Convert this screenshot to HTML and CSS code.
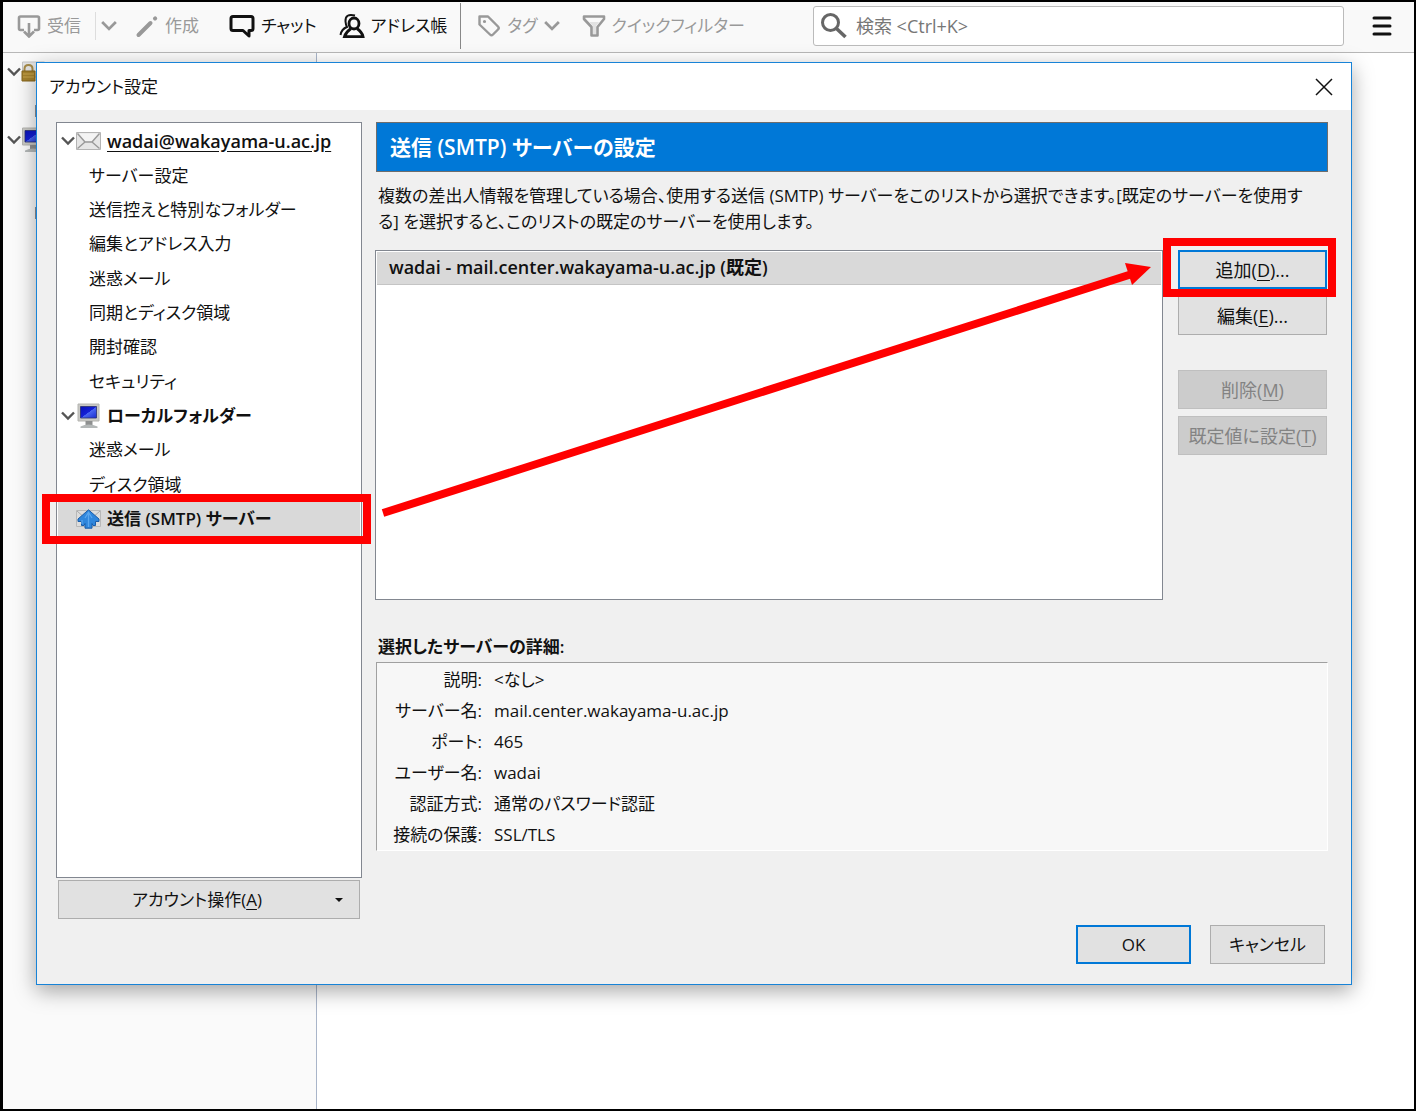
FILE: index.html
```html
<!DOCTYPE html>
<html lang="ja">
<head>
    <meta charset="UTF-8">
    <meta name="viewport" content="width=device-width, initial-scale=1.0">
    <title>アカウント設定</title>
    <link rel="stylesheet" href="styles.css">
</head>
<body>
    <svg class="defs" aria-hidden="true">
        <defs>
            <symbol id="chevron" viewBox="0 0 14 10"><path d="M1 1.5 7 7.5 13 1.5" fill="none" stroke="currentColor" stroke-width="2.4"/></symbol>
            <linearGradient id="screen" x1="0" y1="0" x2="1" y2="1">
                <stop offset="0" stop-color="#0a12b4"/>
                <stop offset="0.5" stop-color="#1420d8"/>
                <stop offset="0.52" stop-color="#4a66f0"/>
                <stop offset="1" stop-color="#1a2cd0"/>
            </linearGradient>
            <symbol id="monitor" viewBox="0 0 24 26">
                <path d="M1.5 1h21v17h-21z" fill="#c9c9c5" stroke="#b4b4b0"/>
                <path d="M4 3.5h16v11.5H4z" fill="url(#screen)" stroke="#2a2f70" stroke-width=".8"/>
                <path d="M9 18h7v4H9z" fill="#8e9090"/>
                <path d="M4 23.5q8-4 17 0V25H4z" fill="#b4b8b8"/>
            </symbol>
            <symbol id="mail" viewBox="0 0 25 18">
                <path d="M.5.5h24v17H.5z" fill="#e6e6e6" stroke="#b4b4b4"/>
                <path d="M2.5 1.5h20L16 9H9z" fill="#f4f4f4"/>
                <path d="M1.5 1.5 9 10h7l7.5-8.5M1.5 16.5 9 10M23.5 16.5 16 10" fill="none" stroke="#999" stroke-width="1.4"/>
            </symbol>
        </defs>
    </svg>

    <div class="app">
        <header class="toolbar">
            <button class="tool get" type="button" disabled>
                <svg width="24" height="24" viewBox="0 0 24 24" fill="none" stroke="currentColor" stroke-width="2.6">
                    <path d="M7 16H3.500Q2 16 2 14.500V4Q2 2.500 3.500 2.500h17Q22 2.500 22 4v10.500q0 1.500-1.500 1.500H17"/>
                    <path d="M12 9v13M7 17.500l5 5 5-5"/>
                </svg>
                受信
            </button>
            <button class="tool drop" type="button" disabled aria-label="受信メニュー"><svg width="16" height="12"><use href="#chevron"/></svg></button>
            <button class="tool write" type="button" disabled>
                <svg width="24" height="24" viewBox="0 0 24 24" stroke="currentColor" stroke-width="4" stroke-linecap="round">
                    <path d="M3.500 21 15.500 9"/><path d="M20 4.500l.2-.2"/>
                </svg>
                作成
            </button>
            <button class="tool chat" type="button">
                <svg width="26" height="24" viewBox="0 0 26 24" fill="none" stroke="currentColor" stroke-width="3" stroke-linejoin="round">
                    <path d="M4 2.500h18q2 0 2 2v10q0 2-2 2h-2V22L14 16.500H4q-2 0-2-2v-10q0-2 2-2z"/>
                </svg>
                チャット
            </button>
            <button class="tool book" type="button">
                <svg width="26" height="26" viewBox="0 0 26 26" fill="none" stroke="currentColor" stroke-width="2.8">
                    <ellipse cx="15" cy="10.500" rx="5" ry="5.500"/>
                    <path d="M12 15.500Q7 19 5.500 23.600h18.500Q23 19 18 15.500"/>
                    <path d="M16 2.500Q6 0 6.500 8.500q.3 3.500 1.500 5.500Q2.500 16 1.500 22" stroke-width="2"/>
                </svg>
                アドレス帳
            </button>
            <span class="divider"></span>
            <button class="tool tag" type="button" disabled>
                <svg width="24" height="24" viewBox="0 0 24 24" fill="none" stroke="currentColor" stroke-width="2.4" stroke-linejoin="round">
                    <path d="M2.500 2.500h8.500L21 12.500q1.500 1.500 0 3L16 20.500q-1.500 1.500-3 0L2.500 10.500z"/>
                    <circle cx="7.500" cy="7.500" r=".8" stroke-width="1.600"/>
                </svg>
                タグ
                <svg width="16" height="12"><use href="#chevron"/></svg>
            </button>
            <button class="tool filter" type="button" disabled>
                <svg width="24" height="24" viewBox="0 0 24 24" fill="none" stroke="currentColor" stroke-width="2.6" stroke-linejoin="round">
                    <path d="M2 2.500h20v2.500L15.500 13v8.500h-6V13L2 5z"/>
                    <path d="M7 8h10l-3 4v8h-3v-8z" fill="#e2e2e2" stroke="none"/>
                </svg>
                クイックフィルター
            </button>
            <label class="search">
                <svg width="28" height="28" viewBox="0 0 28 28" fill="none" stroke="#666" stroke-width="3">
                    <circle cx="10.500" cy="10.500" r="8"/><path d="M16.500 16.500 25.500 25" stroke-width="3.600"/>
                </svg>
                <input type="search" placeholder="検索 &lt;Ctrl+K&gt;" aria-label="検索">
            </label>
            <button class="tool menu" type="button" aria-label="メニュー">
                <svg width="20" height="22" viewBox="0 0 20 22" stroke="currentColor" stroke-width="3" stroke-linecap="round"><path d="M2 3h16M2 11h16M2 19h16"/></svg>
            </button>
        </header>

        <div class="workspace">
            <aside class="folders">
                <div class="folder">
                    <svg class="chev" width="14" height="10"><use href="#chevron"/></svg>
                    <svg width="24" height="24" viewBox="0 0 24 24">
                        <path d="M1.500 2h22v15h-22z" fill="#e4e4e4" stroke="#c4c4c4"/>
                        <path d="M3.500 12V9q0-4 4-4t4 4v3" fill="none" stroke="#a58a48" stroke-width="2"/>
                        <path d="M1 11h13v10H1z" fill="#a5822d" stroke="#84651c"/>
                        <path d="M2 14h11M2 17h11" stroke="#c9a54e"/>
                    </svg>
                </div>
                <div class="folder child"><svg width="20" height="14"><path d="M0 1h20v12H0z" fill="#8b8f96"/></svg></div>
                <div class="folder">
                    <svg class="chev" width="14" height="10"><use href="#chevron"/></svg>
                    <svg width="24" height="26"><use href="#monitor"/></svg>
                </div>
                <div class="folder"></div>
                <div class="folder child"><svg width="20" height="14"><path d="M0 1h20v12H0z" fill="#8b8f96"/></svg></div>
            </aside>
            <main class="messages"></main>
        </div>

        <section class="dialog" role="dialog" aria-labelledby="dialogTitle">
            <div class="titlebar">
                <h1 id="dialogTitle">アカウント設定</h1>
                <button class="close" type="button" aria-label="閉じる">
                    <svg width="18" height="18" viewBox="0 0 18 18" stroke="#111" stroke-width="1.5"><path d="M1 1l16 16M17 1 1 17"/></svg>
                </button>
            </div>

            <div class="content">
                <nav class="accounts">
                    <ul class="tree">
                        <li class="account"><svg class="chev" width="14" height="10"><use href="#chevron"/></svg><svg width="25" height="18"><use href="#mail"/></svg><a class="address" href="#">wadai@wakayama-u.ac.jp</a></li>
                        <li><a href="#">サーバー設定</a></li>
                        <li><a href="#">送信控えと特別なフォルダー</a></li>
                        <li><a href="#">編集とアドレス入力</a></li>
                        <li><a href="#">迷惑メール</a></li>
                        <li><a href="#">同期とディスク領域</a></li>
                        <li><a href="#">開封確認</a></li>
                        <li><a href="#">セキュリティ</a></li>
                        <li class="account"><svg class="chev" width="14" height="10"><use href="#chevron"/></svg><svg width="25" height="26"><use href="#monitor"/></svg><a href="#">ローカルフォルダー</a></li>
                        <li><a href="#">迷惑メール</a></li>
                        <li><a href="#">ディスク領域</a></li>
                        <li class="account selected">
                            <span class="chev"></span>
                            <svg width="25" height="20" viewBox="0 0 25 20">
                                <path d="M.5 1.500h24v16H.5z" fill="#dcdcdc" stroke="#b8b8b8"/>
                                <path d="M1 2l8 7M24 2l-8 7" stroke="#aaa"/>
                                <path d="M12.500.8 23 10v2.500h-3.500v4H17l-1-2v4.700H9V14.500l-1 2H5.500v-4H2V10z" fill="#2f86dc" stroke="#1b5ca8"/>
                                <path d="M12.500 3v15M9 9l3.500-5.500L16 9M6 11v4" fill="none" stroke="#5aa6ee" stroke-width="1.3"/>
                            </svg>
                            <a href="#">送信 (SMTP) サーバー</a>
                        </li>
                    </ul>
                    <button class="btn actions" type="button"><span>アカウント操作(<u>A</u>)</span><i class="caret"></i></button>
                </nav>

                <div class="panel">
                    <h2 class="banner">送信 (SMTP) サーバーの設定</h2>
                    <p class="description">複数の差出人情報を管理している場合、使用する送信 (SMTP) サーバーをこのリストから選択できます。[既定のサーバーを使用する] を選択すると、このリストの既定のサーバーを使用します。</p>

                    <div class="servers">
                        <ul class="server-list" role="listbox" aria-label="送信サーバー">
                            <li role="option" aria-selected="true">wadai - mail.center.wakayama-u.ac.jp (既定)</li>
                        </ul>
                        <div class="server-buttons">
                            <button class="btn primary add" type="button">追加(<u>D</u>)...</button>
                            <button class="btn edit" type="button">編集(<u>E</u>)...</button>
                            <button class="btn" type="button" disabled>削除(<u>M</u>)</button>
                            <button class="btn" type="button" disabled>既定値に設定(<u>T</u>)</button>
                        </div>
                    </div>

                    <h3 class="details-title">選択したサーバーの詳細:</h3>
                    <dl class="details">
                        <dt>説明:</dt><dd>&lt;なし&gt;</dd>
                        <dt>サーバー名:</dt><dd>mail.center.wakayama-u.ac.jp</dd>
                        <dt>ポート:</dt><dd>465</dd>
                        <dt>ユーザー名:</dt><dd>wadai</dd>
                        <dt>認証方式:</dt><dd>通常のパスワード認証</dd>
                        <dt>接続の保護:</dt><dd>SSL/TLS</dd>
                    </dl>
                </div>
            </div>

            <div class="dialog-buttons">
                <button class="btn primary" type="button">OK</button>
                <button class="btn" type="button">キャンセル</button>
            </div>

            <svg class="arrow" width="774" height="260" viewBox="0 0 774 260" aria-hidden="true">
                <path d="M3 254 752 15" stroke="#f00" stroke-width="8"/>
                <path d="M745 4 771 8 752 26z" fill="#f00"/>
            </svg>
        </section>
    </div>
</body>
</html>
```
FILE: styles.css
```css
* {
    box-sizing: border-box;
}
body {
    margin: 0;
    font-family: "Open Sans", "Noto Sans CJK JP", sans-serif;
    font-size: 17px;
    line-height: 26px;
    color: #111;
    font-feature-settings: "palt";
}
h1, h2, h3, p, ul, dl, dd {
    margin: 0;
    padding: 0;
}
ul {
    list-style: none;
}
button, input {
    font: inherit;
    color: inherit;
    font-feature-settings: inherit;
}
svg {
    flex: none;
}
.defs {
    position: absolute;
    width: 0;
    height: 0;
}
.app {
    position: relative;
    display: flex;
    flex-direction: column;
    min-height: 100vh;
    border: 2px solid #000;
    border-left-width: 3px;
    background: #fff;
}

/* toolbar */
.toolbar {
    display: flex;
    align-items: center;
    height: 51px;
    padding: 0 22px 3px 14px;
    background: #f9f9f9;
    border-bottom: 1px solid #b8b8b8;
}
.tool {
    display: flex;
    align-items: center;
    gap: 6px;
    padding: 0;
    border: 0;
    background: none;
    white-space: nowrap;
}
.tool:disabled {
    color: #999;
}
.drop {
    height: 28px;
    margin-left: 14px;
    padding-left: 5px;
    border-left: 1px solid #ddd;
}
.write {
    margin-left: 18px;
}
.chat {
    margin-left: 30px;
}
.book {
    margin-left: 22px;
}
.divider {
    align-self: stretch;
    width: 1px;
    margin: 1px 16px 0 13px;
    background: #888;
}
.filter {
    margin-left: 22px;
}
.search {
    display: flex;
    align-items: center;
    flex: 1;
    gap: 8px;
    height: 40px;
    margin-left: 68px;
    padding: 0 6px;
    border: 1px solid #bbb;
    border-radius: 3px;
    background: #fff;
    font-size: 18px;
}
.search input {
    flex: 1;
    min-width: 0;
    padding: 0;
    border: 0;
    outline: 0;
    background: none;
}
.search input::placeholder {
    color: #777;
}
.menu {
    margin-left: 28px;
}

/* main window behind the dialog */
.workspace {
    display: flex;
    flex: 1;
}
.folders {
    width: 314px;
    padding: 2px 0 0 4px;
    background: #fafafa;
    border-right: 1px solid #a9b5c9;
}
.folder {
    display: flex;
    align-items: center;
    height: 34px;
}
.child {
    padding: 10px 0 0 28px;
}
.chev {
    width: 14px;
    color: #555;
}
.messages {
    flex: 1;
}

/* dialog */
.dialog {
    position: absolute;
    top: 60px;
    left: 33px;
    right: 62px;
    background: #f0f0f0;
    border: 1px solid #1883d7;
    box-shadow: 0 6px 20px rgba(0, 0, 0, 0.35);
}
.titlebar {
    display: flex;
    align-items: center;
    justify-content: space-between;
    height: 47px;
    padding: 0 18px 0 12px;
    background: #fff;
}
.titlebar h1 {
    font-size: 17px;
    font-weight: 400;
}
.close {
    display: flex;
    padding: 0;
    border: 0;
    background: none;
}
.content {
    display: flex;
    gap: 13px;
    padding: 12px 23px 0 19px;
}
.accounts {
    display: flex;
    flex-direction: column;
    flex: none;
    width: 306px;
}
.tree {
    display: grid;
    grid-template-rows: repeat(4, 34px 35px 34px);
    align-content: start;
    min-height: 756px;
    padding: 1px;
    border: 1px solid #828790;
    background: #fff;
}
.tree li {
    display: flex;
    align-items: center;
    padding-left: 31px;
    white-space: nowrap;
}
.tree a {
    color: inherit;
    text-decoration: none;
}
.tree .account {
    gap: 6px;
    padding-left: 3px;
    font-weight: 600;
}
.tree .account .chev {
    margin-right: -5px;
}
.tree .address {
    font-size: 18px;
    text-decoration: underline;
    text-underline-offset: 3px;
}
.tree .selected {
    position: relative;
    background: #d9d9d9;
}
.selected::after, .add::after {
    content: "";
    position: absolute;
    border: 8px solid #f00;
    pointer-events: none;
}
.selected::after {
    inset: -8px -11px -8px -16px;
}

/* buttons */
.btn {
    height: 39px;
    padding: 0;
    border: 1px solid #adadad;
    background: #e1e1e1;
    white-space: nowrap;
}
.btn:disabled {
    border-color: #bfbfbf;
    background: #ccc;
    color: #838383;
}
.btn u {
    text-underline-offset: 3px;
}
.primary {
    border: 2px solid #0078d7;
}
.actions {
    display: flex;
    align-items: center;
    margin: 2px 2px 0;
    padding-right: 16px;
}
.actions span {
    flex: 1;
}
.caret {
    border: 4px solid transparent;
    border-top-color: #111;
    border-bottom: 0;
}

/* right panel */
.panel {
    flex: 1;
    min-width: 0;
}
.banner {
    height: 50px;
    margin-left: 1px;
    padding-left: 13px;
    border: 1px solid #6d6d6d;
    background: #0078d7;
    color: #fff;
    font-size: 21px;
    font-weight: 600;
    line-height: 48px;
}
.description {
    padding: 11px 20px 15px 3px;
}
.servers {
    display: flex;
    gap: 15px;
    padding-right: 1px;
    font-size: 18px;
}
.server-list {
    flex: 1;
    min-height: 350px;
    padding: 1px;
    border: 1px solid #828790;
    background: #fff;
}
.server-list li {
    padding: 2px 12px 4px;
    border-bottom: 1px solid #c4c4c4;
    background: #d9d9d9;
    font-weight: 600;
}
.server-buttons {
    display: flex;
    flex-direction: column;
    gap: 7px;
    width: 149px;
}
.add {
    position: relative;
}
.add::after {
    inset: -14px -11px -10px -17px;
}
.edit {
    margin-bottom: 28px;
}
.details-title {
    padding: 34px 0 2px 3px;
    font-size: 17px;
    font-weight: 600;
}
.details {
    display: grid;
    grid-template-columns: 105px 1fr;
    grid-auto-rows: 31px;
    column-gap: 12px;
    margin-left: 1px;
    padding-top: 1px;
    border: 1px solid #fff;
    border-top-color: #a0a0a0;
    border-left-color: #a0a0a0;
    background: #f7f7f7;
    line-height: 31px;
}
.details dt {
    text-align: right;
    white-space: nowrap;
}
.dialog-buttons {
    display: flex;
    justify-content: flex-end;
    gap: 19px;
    padding: 6px 26px 20px;
}
.dialog-buttons .btn {
    width: 115px;
}
.arrow {
    position: absolute;
    top: 196px;
    left: 343px;
    pointer-events: none;
}
```
